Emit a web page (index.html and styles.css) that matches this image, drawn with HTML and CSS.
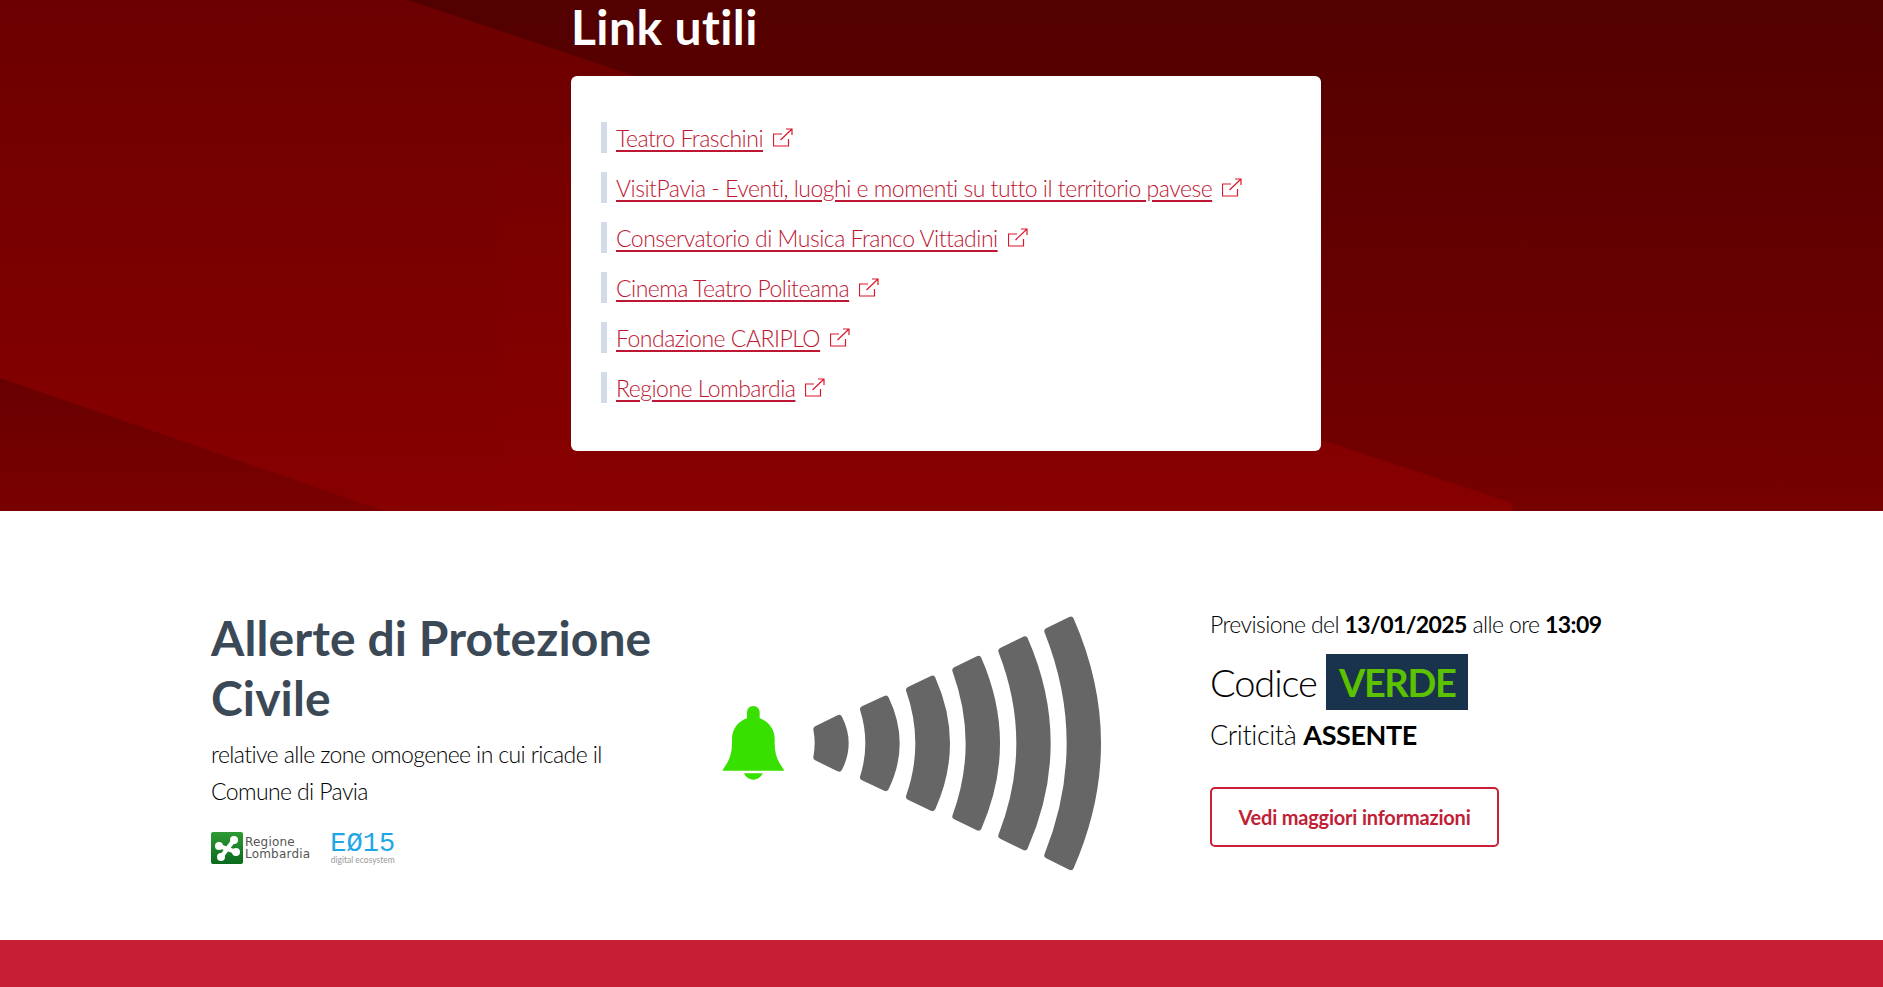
FILE: index.html
```html
<!DOCTYPE html>
<html lang="en">
<head>
  <meta charset="UTF-8">
  <title>Link utili - Comune di Pavia</title>
  <meta name="viewport" content="width=device-width, initial-scale=1.0">
  <link rel="stylesheet" href="styles.css">
</head>
<body>
  <section class="links">
    <svg class="links-bg" viewBox="0 0 1883 511" preserveAspectRatio="none" aria-hidden="true">
      <defs>
        <linearGradient id="bgDark" x1="0" y1="0" x2="0" y2="1">
          <stop offset="0" stop-color="#520000"/>
          <stop offset="1" stop-color="#760000"/>
        </linearGradient>
        <linearGradient id="bgBright" x1="0" y1="0" x2="0" y2="1">
          <stop offset="0" stop-color="#6c0000"/>
          <stop offset="1" stop-color="#880000"/>
        </linearGradient>
        <linearGradient id="bgLow" x1="0" y1="0" x2="0" y2="1">
          <stop offset="0" stop-color="#680000"/>
          <stop offset="1" stop-color="#7a0000"/>
        </linearGradient>
      </defs>
      <rect width="1883" height="511" fill="url(#bgDark)"/>
      <polygon points="0,0 408,0 640,78 1321,440 1512,503 1512,511 0,511" fill="url(#bgBright)"/>
      <polygon points="0,378 385,511 0,511" fill="url(#bgLow)"/>
      <polygon points="502,163 571,180 571,511 502,511" fill="#ff0000" fill-opacity="0.015"/>
    </svg>
    <div class="links-inner">
      <h2 class="links-title">Link utili</h2>
      <ul class="card">
        <li class="card-row"><a href="#">Teatro Fraschini</a><svg class="ext" viewBox="0 0 20 20"><path d="M15.5 11v7H.5V6H9M7.5 12 19 1M13 1h6v6"/></svg></li>
        <li class="card-row"><a href="#">VisitPavia - Eventi, luoghi e momenti su tutto il territorio pavese</a><svg class="ext" viewBox="0 0 20 20"><path d="M15.5 11v7H.5V6H9M7.5 12 19 1M13 1h6v6"/></svg></li>
        <li class="card-row"><a href="#">Conservatorio di Musica Franco Vittadini</a><svg class="ext" viewBox="0 0 20 20"><path d="M15.5 11v7H.5V6H9M7.5 12 19 1M13 1h6v6"/></svg></li>
        <li class="card-row"><a href="#">Cinema Teatro Politeama</a><svg class="ext" viewBox="0 0 20 20"><path d="M15.5 11v7H.5V6H9M7.5 12 19 1M13 1h6v6"/></svg></li>
        <li class="card-row"><a href="#">Fondazione CARIPLO</a><svg class="ext" viewBox="0 0 20 20"><path d="M15.5 11v7H.5V6H9M7.5 12 19 1M13 1h6v6"/></svg></li>
        <li class="card-row"><a href="#">Regione Lombardia</a><svg class="ext" viewBox="0 0 20 20"><path d="M15.5 11v7H.5V6H9M7.5 12 19 1M13 1h6v6"/></svg></li>
      </ul>
    </div>
  </section>

  <section class="alerts">
    <div class="alerts-text">
      <h2 class="alerts-title">Allerte di Protezione Civile</h2>
      <p class="alerts-sub">relative alle zone omogenee in cui ricade il Comune di Pavia</p>
      <div class="partners">
        <div class="rl-logo">
          <svg class="rl-mark" viewBox="0 0 32 32">
            <defs>
              <linearGradient id="rlGreen" x1="0" y1="0" x2="0" y2="1">
                <stop offset="0" stop-color="#2f9a35"/>
                <stop offset="1" stop-color="#0a6a1e"/>
              </linearGradient>
            </defs>
            <rect width="32" height="32" rx="2" fill="url(#rlGreen)"/>
            <g fill="#fff">
              <circle cx="8" cy="14" r="4"/>
              <circle cx="23" cy="8" r="4"/>
              <circle cx="25" cy="20" r="4"/>
              <circle cx="10" cy="25" r="4"/>
            </g>
            <path d="M8 14 25 20M23 8 10 25" stroke="#fff" stroke-width="4.5"/>
          </svg>
          <span class="rl-name">Regione<br>Lombardia</span>
        </div>
        <div class="e015">
          <span class="e015-mark">EØ15</span>
          <span class="e015-sub">digital ecosystem</span>
        </div>
      </div>
    </div>

    <svg class="signal" viewBox="0 0 1260 840" role="img" aria-label="Allerta">
      <path class="bell" d="M160 318c-11 0-19 9-19 19v18c-27 9-45 33-45 62v13c0 24-5 44-15 60l-13 20c-1 1 0 2 2 2h180c2 0 3-1 2-2l-13-20c-10-16-15-36-15-60v-13c0-29-18-53-45-62v-18c0-10-8-19-19-19zM132 520h56c-4 11-15 19-28 19s-24-8-28-19z"/>
      <g class="waves">
        <path d="M350 388Q358 430 350 472L417 505Q455 430 417 355Z"/>
        <path d="M490 328Q522 430 490 532L557 563Q621 430 557 297Z"/>
        <path d="M628 270Q684 430 628 590L697 623Q783 430 697 237Z"/>
        <path d="M767 211Q847 430 767 649L835 682Q945 430 835 178Z"/>
        <path d="M905 153Q1013 430 905 707L974 741Q1110 430 974 119Z"/>
        <path d="M1043 94Q1177 430 1043 766L1112 800Q1274 430 1112 60Z"/>
      </g>
    </svg>

    <div class="forecast">
      <p class="forecast-date">Previsione del <b>13/01/2025</b> alle ore <b>13:09</b></p>
      <p class="forecast-code">Codice <span class="code-badge">VERDE</span></p>
      <p class="forecast-level">Criticità <b>ASSENTE</b></p>
      <a class="btn-outline" href="#">Vedi maggiori informazioni</a>
    </div>
  </section>

  <div class="bottom-bar"></div>
</body>
</html>
```

FILE: styles.css
```css
* { box-sizing: border-box; }

html, body { height: 100%; }

body {
  margin: 0;
  display: flex;
  flex-direction: column;
  overflow: hidden;
  font-family: Lato, "Noto Sans", sans-serif;
  background: #fff;
  color: #000;
}

/* red block with the link list */
.links {
  position: relative;
  height: 511px;
  flex: none;
  overflow: hidden;
}

.links-bg {
  position: absolute;
  top: 0;
  left: 0;
  width: 100%;
  height: 100%;
}

.links-inner {
  position: relative;
  width: 750px;
  margin-left: 571px;
}

.links-title {
  margin: 0;
  height: 76px;
  font-size: 48px;
  line-height: 54px;
  font-weight: 700;
  letter-spacing: 0.4px;
  color: #fff;
}

.card {
  list-style: none;
  margin: 0;
  padding: 46px 30px 0;
  height: 375px;
  background: #fff;
  border-radius: 6px;
}

.card-row {
  display: flex;
  align-items: center;
  height: 31px;
  margin-bottom: 19px;
  padding-left: 9px;
  border-left: 6px solid #d3dae8;
  font-size: 23px;
  font-weight: 300;
  letter-spacing: -0.5px;
}

.card-row a {
  color: #bd1733;
  text-decoration: underline;
  text-decoration-thickness: 2px;
  text-underline-offset: 3px;
}

.ext {
  width: 20px;
  height: 20px;
  margin-left: 10px;
  fill: none;
  stroke: #d9182b;
  stroke-width: 1.2;
}

/* alert block */
.alerts {
  flex: none;
  height: 429px;
  display: grid;
  grid-template-columns: 489px 510px auto;
  padding-left: 211px;
}

.alerts-text {
  padding-top: 97px;
  width: 450px;
}

.alerts-title {
  margin: 0 0 8px;
  font-size: 48px;
  line-height: 60px;
  font-weight: 700;
  letter-spacing: 0.1px;
  color: #3b4856;
}

.alerts-sub {
  margin: 0;
  font-size: 23px;
  line-height: 37px;
  font-weight: 300;
  letter-spacing: -0.6px;
}

.partners {
  display: flex;
  gap: 20px;
  margin-top: 22px;
}

.rl-logo {
  display: flex;
  align-items: center;
  gap: 2px;
}

.rl-mark {
  width: 32px;
  height: 32px;
}

.rl-name {
  font-family: "DejaVu Sans", sans-serif;
  font-size: 12px;
  line-height: 12px;
  letter-spacing: 0.2px;
  color: #555;
}

.e015 {
  display: flex;
  flex-direction: column;
  align-items: center;
}

.e015-mark {
  font-family: "Liberation Mono", monospace;
  font-size: 27px;
  line-height: 24px;
  color: #1ea7e6;
}

.e015-sub {
  font-size: 8.5px;
  line-height: 8px;
  color: #999;
}

.signal {
  width: 420px;
  height: 280px;
  margin-top: 89px;
}

.bell { fill: #38e000; }

.waves {
  fill: #666;
  stroke: #666;
  stroke-width: 20;
  stroke-linejoin: round;
}

.forecast {
  padding-top: 97px;
}

.forecast p { margin: 0; }

.forecast-date {
  font-size: 23px;
  line-height: 32px;
  font-weight: 300;
  letter-spacing: -0.6px;
}

.forecast-date b { font-weight: 700; }

.forecast-code {
  margin-top: 14px !important;
  font-size: 38px;
  line-height: 56px;
  font-weight: 300;
  letter-spacing: -1.1px;
}

.code-badge {
  display: inline-block;
  height: 56px;
  padding: 0 13px;
  background: #1a334d;
  color: #5cc200;
  font-weight: 700;
  letter-spacing: -1.4px;
}

.forecast-level {
  margin-top: 6px !important;
  font-size: 27px;
  line-height: 38px;
  font-weight: 300;
  letter-spacing: -0.4px;
}

.forecast-level b { font-weight: 700; }

.btn-outline {
  display: inline-flex;
  align-items: center;
  justify-content: center;
  width: 289px;
  height: 60px;
  margin-top: 33px;
  border: 2px solid #c91f37;
  border-radius: 5px;
  font-size: 20px;
  font-weight: 700;
  letter-spacing: -0.2px;
  color: #c01f37;
  text-decoration: none;
}

.bottom-bar {
  flex: 1;
  background: #c61f33;
}
```
